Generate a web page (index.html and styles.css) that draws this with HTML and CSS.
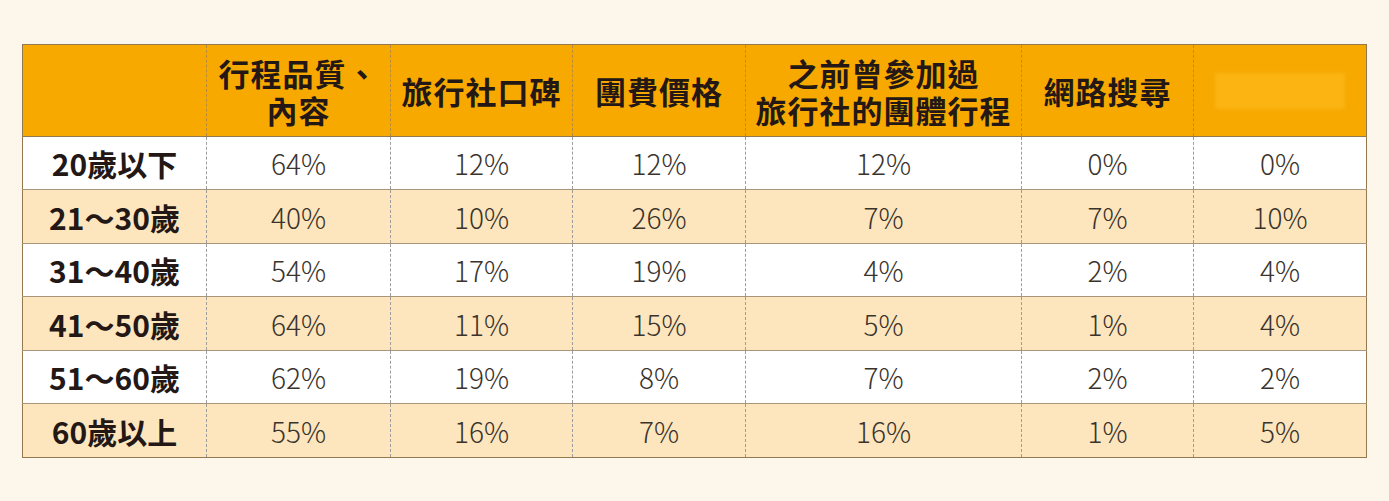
FILE: index.html
```html
<!DOCTYPE html>
<html lang="zh-Hant">
<head>
<meta charset="utf-8">
<link rel="stylesheet" href="styles.css">
</head>
<body>
<div class="wrap">
<table class="survey">
  <colgroup>
    <col class="c-label">
    <col class="c1">
    <col class="c2">
    <col class="c3">
    <col class="c4">
    <col class="c5">
    <col class="c6">
  </colgroup>
  <thead>
    <tr>
      <th></th>
      <th>行程品質、<br>內容</th>
      <th>旅行社口碑</th>
      <th>團費價格</th>
      <th>之前曾參加過<br>旅行社的團體行程</th>
      <th>網路搜尋</th>
      <th><div class="masked"></div></th>
    </tr>
  </thead>
  <tbody>
    <tr class="odd"><td class="label">20歲以下</td><td>64%</td><td>12%</td><td>12%</td><td>12%</td><td>0%</td><td>0%</td></tr>
    <tr class="even"><td class="label">21～30歲</td><td>40%</td><td>10%</td><td>26%</td><td>7%</td><td>7%</td><td>10%</td></tr>
    <tr class="odd"><td class="label">31～40歲</td><td>54%</td><td>17%</td><td>19%</td><td>4%</td><td>2%</td><td>4%</td></tr>
    <tr class="even"><td class="label">41～50歲</td><td>64%</td><td>11%</td><td>15%</td><td>5%</td><td>1%</td><td>4%</td></tr>
    <tr class="odd"><td class="label">51～60歲</td><td>62%</td><td>19%</td><td>8%</td><td>7%</td><td>2%</td><td>2%</td></tr>
    <tr class="even"><td class="label">60歲以上</td><td>55%</td><td>16%</td><td>7%</td><td>16%</td><td>1%</td><td>5%</td></tr>
  </tbody>
</table>
</div>
</body>
</html>
```

FILE: styles.css
```css
html, body {
  margin: 0;
  padding: 0;
  background: #fdf6ea;
}
.wrap {
  padding: 44px 23px 0 22px;
}
.survey {
  width: 1344px;
  border-collapse: collapse;
  table-layout: fixed;
  font-family: "Noto Sans CJK TC", "Noto Sans", sans-serif;
  color: #2b241d;
  border: 1px solid #94784f;
}
.c-label { width: 184px; }
.c1 { width: 184px; }
.c2 { width: 182px; }
.c3 { width: 173px; }
.c4 { width: 276px; }
.c5 { width: 172px; }
.c6 { width: 173px; }
.survey th {
  background: #f7a900;
  height: 91px;
  padding: 0;
  font-size: 31px;
  letter-spacing: 1px;
  line-height: 37px;
  font-weight: 700;
  color: #231815;
  text-align: center;
  vertical-align: middle;
  border-left: 1px dashed #b98a3a;
  border-bottom: 1px solid #94784f;
}
.survey td {
  padding: 0;
  text-align: center;
  vertical-align: middle;
  font-size: 28px;
  font-weight: 300;
  color: #3a332c;
  border-left: 1px dashed #9c9c9c;
  border-top: 1px solid #a8957a;
}
.survey td.label {
  font-size: 30px;
  font-weight: 700;
  color: #231815;
}
.survey tr.odd td { background: #ffffff; height: 52px; }
.survey tr.even td { background: #fde6bd; height: 53px; }
.masked {
  width: 130px;
  height: 36px;
  margin: 0 auto;
  background: #fbb412;
  filter: blur(1.5px);
}
```
